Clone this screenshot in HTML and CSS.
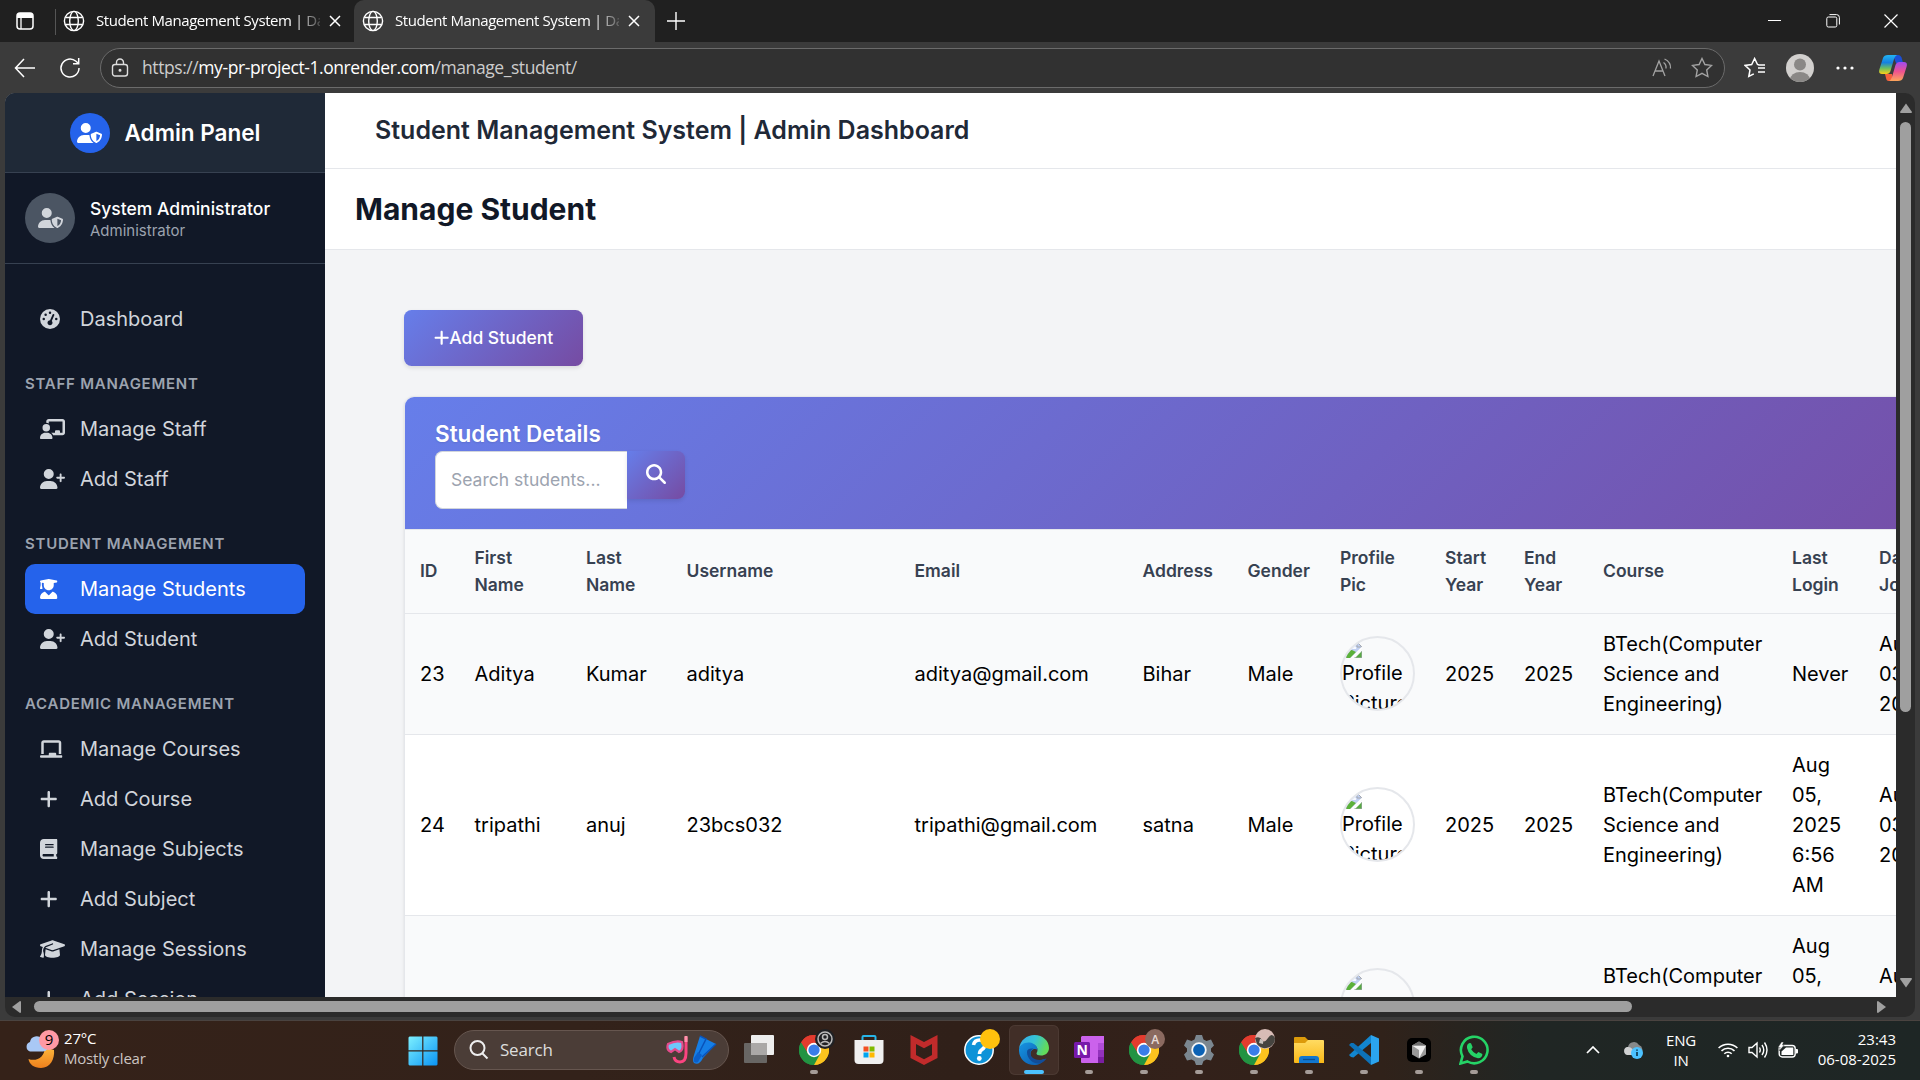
FILE: index.html
```html
<!DOCTYPE html>
<html lang="en">
<head>
<meta charset="utf-8">
<title>Student Management System | Dashboard</title>
<link rel="stylesheet" href="styles.css">
</head>
<body>
<svg class="defs" width="0" height="0" aria-hidden="true">
  <defs>
    <symbol id="user-shield" viewBox="0 0 640 512"><path d="M224 256A128 128 0 1 0 224 0a128 128 0 1 0 0 256zm-45.7 48C79.8 304 0 383.8 0 482.3C0 498.7 13.3 512 29.7 512H418.3c1.8 0 3.5-.2 5.3-.5c-76.3-55.1-99.8-141-103.1-200.2c-16.1-4.8-33.1-7.3-50.7-7.3H178.3zm308.8-78.3l-120 48C358 277.4 352 286.2 352 296c0 63.3 25.9 168.8 134.8 214.2c5.9 2.5 12.6 2.5 18.5 0C614.1 464.8 640 359.3 640 296c0-9.8-6-18.6-15.1-22.3l-120-48c-5.7-2.3-12.1-2.3-17.8 0zM591.4 312c-3.9 50.7-27.2 116.7-95.4 149.7V273.8L591.4 312z"/></symbol>
    <symbol id="gauge" viewBox="0 0 512 512"><path d="M0 256a256 256 0 1 1 512 0A256 256 0 1 1 0 256zM288 96a32 32 0 1 0 -64 0 32 32 0 1 0 64 0zM256 416c35.3 0 64-28.7 64-64c0-17.4-6.9-33.1-18.1-44.6L366 161.7c5.3-12.1-.2-26.3-12.3-31.6s-26.3 .2-31.6 12.3L257.9 288c-.6 0-1.3 0-1.9 0c-35.3 0-64 28.7-64 64s28.7 64 64 64zM176 144a32 32 0 1 0 -64 0 32 32 0 1 0 64 0zM96 288a32 32 0 1 0 0-64 32 32 0 1 0 0 64zm352-32a32 32 0 1 0 -64 0 32 32 0 1 0 64 0z"/></symbol>
    <symbol id="chalkboard-user" viewBox="0 0 640 512"><path d="M160 64c0-35.3 28.7-64 64-64H576c35.3 0 64 28.7 64 64V352c0 35.3-28.7 64-64 64H336.8c-11.8-25.5-29.9-47.5-52.4-64H384V320c0-17.7 14.3-32 32-32h64c17.7 0 32 14.3 32 32v32h64V64L224 64v49.1C205.2 102.2 183.3 96 160 96V64zm0 64a96 96 0 1 1 0 192 96 96 0 1 1 0-192zM133.3 352h53.3C260.3 352 320 411.7 320 485.3c0 14.7-11.9 26.7-26.7 26.7H26.7C11.9 512 0 500.1 0 485.3C0 411.7 59.7 352 133.3 352z"/></symbol>
    <symbol id="user-plus" viewBox="0 0 640 512"><path d="M96 128a128 128 0 1 1 256 0A128 128 0 1 1 96 128zM0 482.3C0 383.8 79.8 304 178.3 304h91.4C368.2 304 448 383.8 448 482.3c0 16.4-13.3 29.7-29.7 29.7H29.7C13.3 512 0 498.7 0 482.3zM504 312V248H440c-13.3 0-24-10.7-24-24s10.7-24 24-24h64V136c0-13.3 10.7-24 24-24s24 10.7 24 24v64h64c13.3 0 24 10.7 24 24s-10.7 24-24 24H552v64c0 13.3-10.7 24-24 24s-24-10.7-24-24z"/></symbol>
    <symbol id="user-graduate" viewBox="0 0 448 512"><path d="M219.3 .5c3.1-.6 6.3-.6 9.4 0l200 40C439.9 42.7 448 52.6 448 64s-8.1 21.3-19.3 23.5L352 102.9V160c0 70.7-57.3 128-128 128s-128-57.3-128-128V102.9L48 93.3v65.1l15.7 78.4c.9 4.7-.3 9.6-3.3 13.3s-7.6 5.9-12.4 5.9H16c-4.8 0-9.3-2.1-12.4-5.9s-4.3-8.6-3.3-13.3L16 158.4V86.6C6.5 83.3 0 74.3 0 64C0 52.6 8.1 42.7 19.3 40.5l200-40zM111.9 327.7c10.5-3.4 21.8 .4 29.4 8.5l71 75.5c6.3 6.7 17 6.7 23.3 0l71-75.5c7.6-8.1 18.9-11.9 29.4-8.5C401 348.6 448 409.4 448 481.3c0 17-13.8 30.7-30.7 30.7H30.7C13.8 512 0 498.2 0 481.3c0-71.9 47-132.7 111.9-153.6z"/></symbol>
    <symbol id="chalkboard" viewBox="0 0 576 512"><path d="M96 32C60.7 32 32 60.7 32 96V384H96V96l384 0V384h64V96c0-35.3-28.7-64-64-64H96zM224 384v32H32c-17.7 0-32 14.3-32 32s14.3 32 32 32H544c17.7 0 32-14.3 32-32s-14.3-32-32-32H416V384c0-17.7-14.3-32-32-32H256c-17.7 0-32 14.3-32 32z"/></symbol>
    <symbol id="plus" viewBox="0 0 448 512"><path d="M256 80c0-17.7-14.3-32-32-32s-32 14.3-32 32V224H48c-17.7 0-32 14.3-32 32s14.3 32 32 32H192V432c0 17.7 14.3 32 32 32s32-14.3 32-32V288H400c17.7 0 32-14.3 32-32s-14.3-32-32-32H256V80z"/></symbol>
    <symbol id="book" viewBox="0 0 448 512"><path d="M96 0C43 0 0 43 0 96V416c0 53 43 96 96 96H384h32c17.7 0 32-14.3 32-32s-14.3-32-32-32V384c17.7 0 32-14.3 32-32V32c0-17.7-14.3-32-32-32H384 96zm0 384H352v64H96c-17.7 0-32-14.3-32-32s14.3-32 32-32zm32-240c0-8.8 7.2-16 16-16H336c8.8 0 16 7.2 16 16s-7.2 16-16 16H144c-8.8 0-16-7.2-16-16zm16 48H336c8.8 0 16 7.2 16 16s-7.2 16-16 16H144c-8.8 0-16-7.2-16-16s7.2-16 16-16z"/></symbol>
    <symbol id="graduation-cap" viewBox="0 0 640 512"><path d="M320 32c-8.1 0-16.1 1.4-23.7 4.1L15.8 137.4C6.3 140.9 0 149.9 0 160s6.3 19.1 15.8 22.6l57.9 20.9C57.3 229.3 48 259.8 48 291.9v28.1c0 28.4-10.8 57.7-22.3 80.8c-6.5 13-13.9 25.8-22.5 37.6C0 442.7-.9 448.3 .9 453.4s6 8.9 11.2 10.2l64 16c4.2 1.1 8.7 .3 12.4-2s6.3-6.1 7.1-10.4c8.6-42.8 4.3-81.2-2.1-108.7C90.3 344.3 86 329.8 80 316.5V291.9c0-30.2 10.2-58.7 27.9-81.5c12.9-15.5 29.6-28 49.2-35.7l157-61.7c8.2-3.2 17.5 .8 20.7 9s-.8 17.5-9 20.7l-157 61.7c-12.4 4.9-23.3 12.4-32.2 21.6l159.6 57.6c7.6 2.7 15.6 4.1 23.7 4.1s16.1-1.4 23.7-4.1L624.2 182.6c9.5-3.4 15.8-12.5 15.8-22.6s-6.3-19.1-15.8-22.6L343.7 36.1C336.1 33.4 328.1 32 320 32zM128 408c0 35.3 86 72 192 72s192-36.7 192-72L496.7 262.6 354.5 314c-11.1 4-22.8 6-34.5 6s-23.5-2-34.5-6L143.3 262.6 128 408z"/></symbol>
    <symbol id="search" viewBox="0 0 512 512"><path d="M416 208c0 45.9-14.9 88.3-40 122.7L502.6 457.4c12.5 12.5 12.5 32.8 0 45.3s-32.8 12.5-45.3 0L330.7 376c-34.4 25.2-76.8 40-122.7 40C93.1 416 0 322.9 0 208S93.1 0 208 0S416 93.1 416 208zM208 352a144 144 0 1 0 0-288 144 144 0 1 0 0 288z"/></symbol>
    <symbol id="globe" viewBox="0 0 22 22"><g fill="none" stroke="#fff" stroke-width="1.4"><circle cx="11" cy="11" r="9.6"/><ellipse cx="11" cy="11" rx="4.3" ry="9.6"/><path d="M2.3 7.5h17.4M2.3 14.5h17.4"/></g></symbol>
    <symbol id="close" viewBox="0 0 12 12"><path d="M1 1l10 10M11 1L1 11" fill="none" stroke="#fff" stroke-width="1.5"/></symbol>
    <symbol id="broken" viewBox="0 0 16 16"><path d="M0 0h11l5 5v2L7 16H0z" fill="#c0d0f2"/><path d="M2 5c0-2 4-3 6-1 2 0 3 2 2 3H2z" fill="#f6f9ff"/><path d="M0 16v-4c2-4 5-5 8-3l2 1-6 6z" fill="#5bb13a"/><path d="M16 9v7H9z" fill="#58a944"/><path d="M0 16V0h11l5 5v3M16 9v7H8M11 0v5h5" fill="none" stroke="#a3a7ae" stroke-width="1"/><path d="M17 5L5 17" stroke="#fff" stroke-width="2"/></symbol>
    <symbol id="chrome" viewBox="0 0 48 48"><path d="M24 24L3.2 12A24 24 0 0 1 44.8 12z" fill="#e33b2e"/><path d="M24 24L44.8 12A24 24 0 0 1 24 48z" fill="#fcc31e"/><path d="M24 24V48A24 24 0 0 1 3.2 12z" fill="#229342"/><path d="M24 13H45.3A24 24 0 0 0 3.2 12L14 30z" fill="#e33b2e"/><path d="M33.5 29.5L24 48A24 24 0 0 0 45.3 13H24z" fill="#fcc31e"/><path d="M14.5 29.5L3.2 12A24 24 0 0 0 24 48l10-18z" fill="#229342"/><circle cx="24" cy="24" r="11.5" fill="#fff"/><circle cx="24" cy="24" r="9" fill="#3a7de8"/></symbol>
    <linearGradient id="winG" x1="0" y1="0" x2="1" y2="1"><stop offset="0" stop-color="#7df0ff"/><stop offset="1" stop-color="#0a94f5"/></linearGradient>
    <linearGradient id="moonG" x1="0" y1="0" x2="0" y2="1"><stop offset="0" stop-color="#fdb93d"/><stop offset="1" stop-color="#ee7f1c"/></linearGradient>
    <linearGradient id="edgeT" x1="0" y1="0" x2="1" y2=".3"><stop offset="0" stop-color="#35a8ef"/><stop offset=".55" stop-color="#35c3d4"/><stop offset="1" stop-color="#62db5c"/></linearGradient>
    <linearGradient id="edgeB" x1="0" y1="0" x2="1" y2="1"><stop offset="0" stop-color="#1695e2"/><stop offset="1" stop-color="#0c56ab"/></linearGradient>
    <linearGradient id="foldG" x1="0" y1="0" x2="0" y2="1"><stop offset="0" stop-color="#ffdb62"/><stop offset="1" stop-color="#f9b817"/></linearGradient>
    <linearGradient id="copA" x1="0" y1="0" x2="0" y2="1"><stop offset="0" stop-color="#22b5f3"/><stop offset=".4" stop-color="#1580e0"/><stop offset=".7" stop-color="#6cbf5f"/><stop offset="1" stop-color="#fbd018"/></linearGradient>
    <linearGradient id="copB" x1="0" y1="0" x2="0" y2="1"><stop offset="0" stop-color="#a04bf0"/><stop offset=".5" stop-color="#ee5290"/><stop offset="1" stop-color="#fda65a"/></linearGradient>
  </defs>
</svg>

<div class="browser">
  <div class="tabs">
    <svg class="tab-menu" viewBox="0 0 18 18" width="18" height="18"><rect x="1" y="1" width="16" height="16" rx="3" fill="none" stroke="#fff" stroke-width="1.5"/><path d="M1 6V4a3 3 0 0 1 3-3h10a3 3 0 0 1 3 3v2z" fill="#fff"/><path d="M5 5v12" stroke="#fff" stroke-width="1.3"/></svg>
    <div class="tab">
      <svg width="22" height="22"><use href="#globe"/></svg>
      <span class="tab-title">Student Management System | Dashboard</span>
      <svg width="12" height="12"><use href="#close"/></svg>
    </div>
    <div class="tab tab-active">
      <svg width="22" height="22"><use href="#globe"/></svg>
      <span class="tab-title">Student Management System | Dashboard</span>
      <svg width="12" height="12"><use href="#close"/></svg>
    </div>
    <svg class="tab-new" width="18" height="18" viewBox="0 0 18 18"><path d="M9 0v18M0 9h18" stroke="#fff" stroke-width="1.4"/></svg>
    <div class="window-buttons">
      <svg width="14" height="14" viewBox="0 0 14 14"><path d="M0 6.5h13" stroke="#fff"/></svg>
      <svg width="14" height="14" viewBox="0 0 14 14" fill="none" stroke="#fff"><rect x=".8" y="3" width="10" height="10" rx="1.5"/><path d="M3.5.6h7A2.9 2.9 0 0 1 13.4 3.500v7"/></svg>
      <svg width="14" height="14" viewBox="0 0 14 14"><path d="M.5.5l13 13M13.500.5l-13 13" stroke="#fff" stroke-width="1.2"/></svg>
    </div>
  </div>

  <div class="toolbar">
    <svg class="back" width="22" height="20" viewBox="0 0 22 20"><path d="M10 1L1.500 10l8.500 9M1.500 10H21" fill="none" stroke="#fff" stroke-width="1.5"/></svg>
    <svg class="reload" width="22" height="22" viewBox="0 0 22 22"><path d="M20 11a9 9 0 1 1-3-6.700L19.500 6.500M19.700 1v5.700H14" fill="none" stroke="#fff" stroke-width="1.5"/></svg>
    <div class="address">
      <svg width="18" height="20" viewBox="0 0 18 20" fill="none" stroke="#ddd" stroke-width="1.4"><rect x="1.500" y="6.500" width="15" height="11.500" rx="2.500"/><path d="M5.500 6.500V4.500a3.500 3.500 0 0 1 7 0v2"/><circle cx="9" cy="12.300" r=".8" fill="#ddd"/></svg>
      <span class="url">https://<b>my-pr-project-1.onrender.com</b>/manage_student/</span>
      <svg class="read-aloud" width="20" height="20" viewBox="0 0 20 20" fill="none" stroke="#a3a3a3" stroke-width="1.300"><path d="M1 18L7 3l6 15M3 13h8M11.500 4.500q3 2 2.500 6M12.500 1q6.500 3 6 9.500"/></svg>
      <svg width="22" height="21" viewBox="0 0 22 21"><path d="M11 1.500l2.900 6 6.600.9-4.800 4.600 1.200 6.500-5.900-3.100-5.900 3.100 1.200-6.500L1.500 8.400l6.600-.9z" fill="none" stroke="#a3a3a3" stroke-width="1.400"/></svg>
    </div>
    <svg class="favorites" width="22" height="21" viewBox="0 0 22 21" fill="none" stroke="#fff" stroke-width="1.500"><path d="M21 8h-6l-1.500-.5-2.900-6-2.900 6-6.600.9L6 13l-1.200 6.500 5-2.600M14 11h7M14 15h7"/></svg>
    <svg class="profile" width="28" height="28" viewBox="0 0 28 28"><clipPath id="pc"><circle cx="14" cy="14" r="14"/></clipPath><g clip-path="url(#pc)"><path d="M0 0h28v28H0z" fill="#d2d0ce"/><circle cx="14" cy="10.500" r="6" fill="#8a8886"/><ellipse cx="14" cy="26" rx="10" ry="8" fill="#8a8886"/></g></svg>
    <svg class="more" width="18" height="4" viewBox="0 0 18 4" fill="#fff"><circle cx="2" cy="2" r="1.600"/><circle cx="9" cy="2" r="1.600"/><circle cx="16" cy="2" r="1.600"/></svg>
    <svg class="copilot" width="28" height="28" viewBox="0 0 28 28"><path d="M14 1h5q3 0 4 4l1 4h-7z" fill="#1c4fd6"/><path d="M14 27H9.500q-2 0-2.500-3l-1-4h7z" fill="#f4603c"/><path d="M9 1h9q-2 1-3 4l-3.500 12q-1 3-4 3H3q-4 0-2.500-5L4 4q1-3 5-3z" fill="url(#copA)"/><path d="M19 27h-9q2-1 3-4l3.500-12q1-3 4-3H25q4 0 2.500 5L24 24q-1 3-5 3z" fill="url(#copB)"/></svg>
  </div>

  <div class="viewport">
    <div class="page">
      <aside class="sidebar">
        <div class="brand">
          <span class="brand-icon"><svg width="25" height="20"><use href="#user-shield"/></svg></span>
          <span class="brand-name">Admin Panel</span>
        </div>
        <div class="admin">
          <span class="admin-avatar"><svg width="25" height="20"><use href="#user-shield"/></svg></span>
          <div><div class="admin-name">System Administrator</div><div class="admin-role">Administrator</div></div>
        </div>
        <nav class="nav">
          <a class="nav-item"><svg width="20" height="20"><use href="#gauge"/></svg><span>Dashboard</span></a>
          <h3>STAFF MANAGEMENT</h3>
          <a class="nav-item"><svg width="25" height="20"><use href="#chalkboard-user"/></svg><span>Manage Staff</span></a>
          <a class="nav-item"><svg width="25" height="20"><use href="#user-plus"/></svg><span>Add Staff</span></a>
          <h3>STUDENT MANAGEMENT</h3>
          <a class="nav-item nav-current"><svg width="17.500" height="20"><use href="#user-graduate"/></svg><span>Manage Students</span></a>
          <a class="nav-item"><svg width="25" height="20"><use href="#user-plus"/></svg><span>Add Student</span></a>
          <h3>ACADEMIC MANAGEMENT</h3>
          <a class="nav-item"><svg width="22.500" height="20"><use href="#chalkboard"/></svg><span>Manage Courses</span></a>
          <a class="nav-item"><svg width="17.500" height="20"><use href="#plus"/></svg><span>Add Course</span></a>
          <a class="nav-item"><svg width="17.500" height="20"><use href="#book"/></svg><span>Manage Subjects</span></a>
          <a class="nav-item"><svg width="17.500" height="20"><use href="#plus"/></svg><span>Add Subject</span></a>
          <a class="nav-item"><svg width="25" height="20"><use href="#graduation-cap"/></svg><span>Manage Sessions</span></a>
          <a class="nav-item"><svg width="17.500" height="20"><use href="#plus"/></svg><span>Add Session</span></a>
        </nav>
      </aside>
      <main class="main">
        <header class="site-header">Student Management System | Admin Dashboard</header>
        <h1 class="page-title">Manage Student</h1>
        <section class="content">
          <a class="btn"><svg width="15.300" height="17.500"><use href="#plus"/></svg>Add Student</a>
          <div class="card">
            <div class="card-header">
              <h2>Student Details</h2>
              <div class="search">
                <input type="text" placeholder="Search students...">
                <button><svg width="20" height="20"><use href="#search"/></svg></button>
              </div>
            </div>
            <table>
              <colgroup><col class="c-id"><col class="c-first"><col class="c-last"><col class="c-user"><col class="c-email"><col class="c-addr"><col class="c-gender"><col class="c-pic"><col class="c-year"><col class="c-year"><col class="c-course"><col class="c-login"><col class="c-joined"></colgroup>
              <thead><tr><th>ID</th><th>First<br>Name</th><th>Last<br>Name</th><th>Username</th><th>Email</th><th>Address</th><th>Gender</th><th>Profile<br>Pic</th><th>Start<br>Year</th><th>End<br>Year</th><th>Course</th><th>Last<br>Login</th><th>Date<br>Joined</th></tr></thead>
              <tbody>
                <tr class="short"><td>23</td><td>Aditya</td><td>Kumar</td><td>aditya</td><td>aditya@gmail.com</td><td>Bihar</td><td>Male</td><td><span class="pic"><svg width="16" height="16"><use href="#broken"/></svg><span>Profile</span><span>Picture</span></span></td><td>2025</td><td>2025</td><td>BTech(Computer<br>Science and<br>Engineering)</td><td>Never</td><td>Aug<br>03,<br>2025</td></tr>
                <tr><td>24</td><td>tripathi</td><td>anuj</td><td>23bcs032</td><td>tripathi@gmail.com</td><td>satna</td><td>Male</td><td><span class="pic"><svg width="16" height="16"><use href="#broken"/></svg><span>Profile</span><span>Picture</span></span></td><td>2025</td><td>2025</td><td>BTech(Computer<br>Science and<br>Engineering)</td><td>Aug<br>05,<br>2025<br>6:56<br>AM</td><td>Aug<br>03,<br>2025</td></tr>
                <tr><td></td><td></td><td></td><td></td><td></td><td></td><td></td><td><span class="pic"><svg width="16" height="16"><use href="#broken"/></svg></span></td><td></td><td></td><td>BTech(Computer<br><br><br></td><td>Aug<br>05,<br><br><br><br></td><td>Aug<br><br><br></td></tr>
              </tbody>
            </table>
          </div>
        </section>
      </main>
    </div>
    <div class="vscroll">
      <svg width="12" height="10" viewBox="0 0 12 10"><path d="M6 .5L12 9q0 1-1 1H1q-1 0-1-1z" fill="#a0a0a0"/></svg>
      <span class="vthumb"></span>
      <svg class="vdown" width="12" height="10" viewBox="0 0 12 10"><path d="M6 9.500L12 1q0-1-1-1H1Q0 0 0 1z" fill="#a0a0a0"/></svg>
    </div>
    <div class="hscroll">
      <svg width="9" height="12" viewBox="0 0 9 12"><path d="M0 6L8 0q1 0 1 1v10q0 1-1 1z" fill="#a0a0a0"/></svg>
      <span class="hthumb"></span>
      <svg class="hright" width="9" height="12" viewBox="0 0 9 12"><path d="M9 6L1 0Q0 0 0 1v10q0 1 1 1z" fill="#a0a0a0"/></svg>
    </div>
  </div>
</div>

<footer class="taskbar">
  <div class="weather">
    <svg width="36" height="44" viewBox="0 0 36 44"><path d="M29 22c1 9-4 18-13 18C9 40 4 36 3.500 31c8 3 17-2 16-12z" fill="url(#moonG)"/><path d="M5 23.500a5 5 0 0 1 0-9.500 6.500 6.500 0 0 1 12-2.500 6 6 0 0 1 1 12z" fill="#a9c8f5"/><circle cx="24" cy="12" r="10" fill="#ff99a4"/><text x="24" y="17.300" text-anchor="middle" class="badge-number">9</text></svg>
    <div class="weather-text"><div>27°C</div><div class="dim">Mostly clear</div></div>
  </div>
  <svg class="start" width="30" height="30" viewBox="0 0 30 30" fill="url(#winG)"><path d="M1.500.5h12.700v13.700H.5V1.500zM15.400.5h13.100l1 1v12.700H15.400zM.5 15.400h13.700v14.100H1.500l-1-1zM15.400 15.400h14.100v13.100l-1 1H15.400z"/></svg>
  <div class="task-search">
    <svg width="20" height="20" viewBox="0 0 20 20" fill="none" stroke="#eee" stroke-width="2"><circle cx="8.500" cy="8" r="7"/><path d="M13.500 13.500l5 5"/></svg>
    <span>Search</span>
    <svg width="52" height="30" viewBox="0 0 52 30"><path d="M20 2v16q0 9-6 9-5 0-6-5" fill="none" stroke="#fb4480" stroke-width="3"/><path d="M20 1v6" stroke="#ff94ac" stroke-width="3"/><path d="M2 9q8-4 14-2 2 8-3 10l-4-3-4 3Q0 15 2 9z" fill="#6dc8fb" stroke="#e54b8c" stroke-width="2.200"/><path d="M34 1l16 8-13 14q-4 8-9 5-2-2 0-8z" fill="#157ee6"/><path d="M34 1l6 3-9 18M50 9L36 22" stroke="#0a53ba" stroke-width="1.500" fill="none"/><path d="M32 17l4 3-4 7q-5 2-4-4z" fill="#0b5fc9"/></svg>
  </div>
  <div class="apps">
    <span class="app"><svg width="30" height="30" viewBox="0 0 30 30"><rect y="8" width="23" height="20" rx="1" fill="#686664"/><rect x="7" width="23" height="20" rx="1" fill="#ededed"/><path d="M7 8h16v12H7z" fill="#aaa8a7"/></svg></span>
    <span class="app running"><svg width="30" height="30"><use href="#chrome"/></svg><svg class="badge" width="20" height="20" viewBox="0 0 20 20"><circle cx="10" cy="10" r="10" fill="#202124"/><circle cx="10" cy="10" r="7" fill="none" stroke="#bbb" stroke-width="1.500"/><circle cx="10" cy="8" r="2.500" fill="none" stroke="#bbb" stroke-width="1.500"/><path d="M5.500 14.500q4.500-4 9 0" fill="none" stroke="#bbb" stroke-width="1.500"/></svg></span>
    <span class="app"><svg width="30" height="30" viewBox="0 0 30 30"><path d="M8.500 6V2q0-1 1-1h11q1 0 1 1v4" fill="none" stroke="#27b5e8" stroke-width="2"/><path d="M.5 5h29v20q0 4-4 4h-21q-4 0-4-4z" fill="#f0f0f0"/><path d="M9.500 11.500h5v5h-5z" fill="#f25022"/><path d="M15.500 11.500h5v5h-5z" fill="#7fba00"/><path d="M9.500 17.500h5v5h-5z" fill="#00a4ef"/><path d="M15.500 17.500h5v5h-5z" fill="#ffb900"/></svg></span>
    <span class="app"><svg width="28" height="30" viewBox="0 0 28 30"><path d="M.5 0L14 7 27.500 0v23L14 30 .5 23zM6 9v11l8 4.300 8-4.300V9l-8 4.300z" fill="#c12b2b" fill-rule="evenodd"/></svg></span>
    <span class="app"><svg width="30" height="30" viewBox="0 0 30 30"><circle cx="15" cy="15" r="14.200" fill="#0e93d8" stroke="#fff" stroke-width="1.500"/><path d="M9.500 10q1-5 6-5 5.500 0 5.500 4.500 0 3-3 5-2.500 1.500-2.500 4.500" fill="none" stroke="#fff" stroke-width="3.600"/><circle cx="15.300" cy="23.500" r="2.400" fill="#fff"/></svg><svg class="badge" width="20" height="20"><circle cx="10" cy="10" r="10" fill="#ffc10d"/></svg></span>
    <span class="app focused"><svg width="30" height="30" viewBox="0 0 30 30"><path d="M0 14C1 5 8 0 15.500 0 24 0 30 6 30 13c0 5-4 7.500-8 7.500-3 0-4.500-1-4.500-2 0-1 1-1.500 1-3.500 0-4-4-6.500-8-6.500C5 8.500 1 11 0 14z" fill="url(#edgeT)"/><path d="M0 14c1-4 5-7 10.500-6.500 5 .5 8 4 8 7.500-2-2-7-1-7 4 0 6 7 8 14 5-2 4-6 6-10 6C6 30-.5 23 0 14z" fill="url(#edgeB)"/><path d="M8 17c0 7 6 12 13 11.500 3-1 5-3 6.500-5-.5-.5-3 1.500-7 1.500-6 0-10-4-9-8 .5-2 2-3 3-3.500C10 13 8 14.500 8 17z" fill="#124d99"/></svg></span>
    <span class="app running"><svg width="30" height="30" viewBox="0 0 30 30"><path d="M8 1h22v27H8q-1 0-1-1V2z" fill="#cb62ec"/><path d="M24 8h6v7h-6z" fill="#b14cd8"/><path d="M24 15h6v7h-6z" fill="#9332bd"/><path d="M24 22h6v6h-6z" fill="#7a1ea2"/><rect y="7" width="16" height="16" rx="1.500" fill="#7719aa"/><text x="8" y="20" text-anchor="middle" class="onenote-letter">N</text></svg></span>
    <span class="app running"><svg width="30" height="30"><use href="#chrome"/></svg><svg class="badge" width="20" height="20"><circle cx="10" cy="10" r="10" fill="#8b6a60"/><text x="10" y="14.500" text-anchor="middle" class="badge-letter">A</text></svg></span>
    <span class="app running"><svg width="30" height="30" viewBox="0 0 30 30"><path d="M12 0h6l1.500 4.500 3 1.500L27 4.500l3 6-3 3v3l3 3-3 6-4.500-1-3 1.500L18 30h-6l-1.500-4-3-1.500L3 25.500l-3-6 3-3v-3l-3-3 3-6L7.500 6l3-1.500z" fill="#7b8790"/><circle cx="15" cy="15" r="6.800" fill="#0b62b5" stroke="#f3f6f8" stroke-width="1.800"/></svg></span>
    <span class="app running"><svg width="30" height="30"><use href="#chrome"/></svg><svg class="badge" width="20" height="20" viewBox="0 0 20 20"><circle cx="10" cy="10" r="10" fill="#d8bcb6"/><path d="M0 9q5-2 7 2t6-2 7 0a10 10 0 0 1-18 6z" fill="#46443f"/><path d="M5 10q4 0 3 5l-4-1z" fill="#c7c1bb"/></svg></span>
    <span class="app running"><svg width="30" height="30" viewBox="0 0 30 30"><path d="M0 3q0-1 1-1h10l3 3v5H0z" fill="#dc9a0a"/><path d="M0 8h11l3-3h15q1 0 1 1v22H1q-1 0-1-1z" fill="url(#foldG)"/><path d="M5 28v-4q0-3 3-3h14q3 0 3 3v4z" fill="#1277cf"/><path d="M9 24.500h12" stroke="#0b4f93" stroke-width="1.300"/></svg></span>
    <span class="app running"><svg width="30" height="30" viewBox="0 0 30 30"><path d="M22 0v8L4.500 22.500 2 22 0 20z" fill="#1286cf"/><path d="M0 10l2-2h2.500L22 22v8z" fill="#0d72b8"/><path d="M22 0l8 3.500v23L22 30z" fill="#2ba4ee"/></svg></span>
    <span class="app running"><svg width="24" height="24" viewBox="0 0 24 24"><rect width="24" height="24" rx="5" fill="#000"/><path d="M12 3.500l7 4v9l-7 4-7-4v-9z" fill="#999"/><path d="M5 7.500h14l-7 13V12z" fill="#eee"/><path d="M5 7.500l7-4 7 4z" fill="#6f6f6f"/></svg></span>
    <span class="app running"><svg width="30" height="30" viewBox="0 0 30 30"><path d="M1.500 28.500l2-7.200A13.300 13.300 0 1 1 8.500 26.500z" fill="none" stroke="#25d366" stroke-width="2.600"/><path d="M10.500 8l1.500.2 1.700 4-1.500 2q2 3.500 5.200 4.800l2-2 4 2q0 4-4.400 4.300Q10 21.500 8 13q-.5-4 2.500-5z" fill="#25d366"/></svg></span>
  </div>
  <div class="tray">
    <svg class="chevron" width="14" height="8" viewBox="0 0 14 8"><path d="M1 7l6-6 6 6" fill="none" stroke="#fff" stroke-width="1.700"/></svg>
    <svg class="cloud" width="20" height="18" viewBox="0 0 20 18"><path d="M5 6a6 6 0 0 1 11-2 5 5 0 0 1 1 9H8z" fill="#87898a"/><path d="M4 14a4.200 4.200 0 0 1 0-8q6-1 8 8z" fill="#d0d1d2"/><circle cx="14" cy="12" r="6" fill="#4cc2ff"/><path d="M14 11v4M14 8.500v1.300" stroke="#06283b" stroke-width="1.500"/></svg>
    <div class="lang"><div>ENG</div><div>IN</div></div>
    <svg class="wifi" width="20" height="16" viewBox="0 0 20 16" fill="none" stroke="#fff" stroke-width="1.600"><path d="M.6 6a13.500 13.500 0 0 1 18.800 0M3.500 8.900a9.300 9.300 0 0 1 13 0M6.300 11.700a5.300 5.300 0 0 1 7.400 0"/><circle cx="10" cy="14" r="1.300" fill="#fff" stroke="none"/></svg>
    <svg class="volume" width="20" height="18" viewBox="0 0 20 18" fill="none" stroke="#fff" stroke-width="1.400"><path d="M1 6.500h3L9 2v14l-5-4.500H1zM11.500 6.500q1.500 2.500 0 5M14 4q3.500 5 0 10M16.500 1.500q5 7.500 0 15"/></svg>
    <svg class="battery" width="20" height="16" viewBox="0 0 20 16"><rect x="1.200" y="3.500" width="16" height="11.500" rx="3" fill="none" stroke="#fff" stroke-width="1.400"/><path d="M3.500 13V9.500L8 5.500h7.300V13zM18 7h1q1 0 1 1v2.500q0 1-1 1h-1z" fill="#fff"/><path d="M3.500 0L0 5.500h2.200l-1 3.500 5-6H4.500L5.500 0z" fill="#fff" stroke="#202624" stroke-width=".4"/></svg>
    <div class="clock"><div>23:43</div><div>06-08-2025</div></div>
  </div>
</footer>
</body>
</html>
```
FILE: styles.css
```css
* { box-sizing: border-box; }
body { margin: 0; width: 1920px; height: 1080px; overflow: hidden; background: #3b3b3b; font-family: Inter, sans-serif; font-size: 20px; }
.defs { position: absolute; }
svg { display: block; flex: none; }
h1, h2, h3 { margin: 0; }

/* Browser chrome */
.browser { height: 1020px; background: #3b3b3b; }
.tabs { display: flex; align-items: center; height: 42px; padding-bottom: 1px; background: #202020; font-family: "Open Sans", sans-serif; }
.tab-menu { margin-left: 16px; }
.tab { display: flex; align-items: center; width: 299px; height: 42px; padding-left: 7px; color: #fff; font-size: 15px; letter-spacing: -0.42px; }
.tab:not(.tab-active) { margin-left: 21px; border-image: linear-gradient(transparent 22%, #555 22%, #555 82%, transparent 82%) 1; border-left: 1px solid; }
.tab-active { width: 301px; padding-left: 8px; border-radius: 10px 10px 0 0; background: #3b3b3b; }
.tab-title { width: 224px; margin: 0 9px 2px 11px; overflow: hidden; white-space: nowrap; -webkit-mask-image: linear-gradient(90deg, #000 198px, transparent 230px); mask-image: linear-gradient(90deg, #000 198px, transparent 230px); }
.tab-new { margin-left: 12px; }
.window-buttons { display: flex; gap: 44px; margin-left: auto; padding-right: 22px; }
.toolbar { display: flex; align-items: center; height: 51px; font-family: "Open Sans", sans-serif; }
.back { margin-left: 14px; }
.reload { margin-left: 23px; }
.address { display: flex; align-items: center; width: 1625px; height: 40px; margin-left: 19px; padding: 0 11px 0 10px; border: 1px solid #6b6b6b; border-radius: 20px; background: #313131; }
.url { margin-left: 13px; padding-bottom: 1px; color: #ccc; font-size: 17.5px; letter-spacing: -0.42px; }
.url b { color: #fff; font-weight: 400; }
.read-aloud { margin: 0 19px 0 auto; }
.favorites { margin-left: 19px; }
.profile { margin-left: 20px; }
.more { margin-left: 22px; }
.copilot { margin-left: 25px; }

.viewport { display: grid; grid-template: 904px 20px / 1891px 19px; margin-left: 5px; width: 1910px; background: #2b2b2b; border-radius: 10px; overflow: hidden; }
.page { display: flex; overflow: hidden; height: 904px; background: #f3f4f6; }
.vscroll { grid-row: 1 / 3; grid-column: 2; display: flex; flex-direction: column; align-items: center; padding-top: 10px; }
.vthumb { width: 11px; height: 590px; margin-top: 9px; border-radius: 6px; background: #9f9f9f; }
.vdown { margin-top: 266px; }
.hscroll { grid-row: 2; grid-column: 1; display: flex; align-items: center; padding: 0 0 1px 7px; }
.hthumb { width: 1598px; height: 11px; margin-left: 13px; border-radius: 6px; background: #9f9f9f; }
.hright { margin-left: 245px; }

/* Sidebar */
.sidebar { flex: none; width: 320px; background: #111827; color: #d1d5db; }
.brand { display: flex; align-items: center; justify-content: center; gap: 15px; height: 80px; background: #1f2937; border-bottom: 1px solid #374151; }
.brand-icon, .admin-avatar { display: grid; place-items: center; border-radius: 50%; }
.brand-icon { width: 40px; height: 40px; background: #2563eb; fill: #fff; }
.brand-name { color: #fff; font-size: 22.5px; font-weight: 600; }
.admin { display: flex; align-items: center; gap: 15px; height: 91px; padding: 0 20px; border-bottom: 1px solid #374151; }
.admin-avatar { width: 50px; height: 50px; background: #4b5563; fill: #d1d5db; }
.admin-name { color: #fff; font-size: 17.5px; font-weight: 500; line-height: 25px; }
.admin-role { color: #9ca3af; font-size: 15px; line-height: 20px; }
.nav { padding: 30px 20px 0; }
.nav-item { display: flex; align-items: center; height: 50px; padding-left: 15px; border-radius: 10px; font-size: 20px; fill: currentColor; }
.nav-item svg { margin-right: auto; }
.nav-item span { width: 225px; }
.nav-current { background: #2563eb; color: #fff; }
.nav h3 { height: 60px; padding-top: 30px; color: #9ca3af; font-size: 15px; font-weight: 600; letter-spacing: 0.75px; line-height: 20px; }

/* Main column */
.main { flex: none; width: 1845px; background: #f3f4f6; }
.site-header { height: 76px; padding: 0 50px; background: #fff; border-bottom: 1px solid #e5e7eb; color: #1f2937; font-size: 25px; font-weight: 600; line-height: 74px; }
.page-title { height: 81px; padding: 0 30px; background: #fff; border-bottom: 1px solid #e5e7eb; color: #111827; font-size: 30px; font-weight: 700; line-height: 80px; }
.content { padding: 60px 79px; }
.btn { display: inline-flex; align-items: center; height: 56px; padding: 0 30px 1px; border-radius: 7.5px; background: linear-gradient(135deg, #667eea 0%, #764ba2 100%); box-shadow: 0 2px 4px rgb(0 0 0 / 10%); color: #fff; fill: #fff; font-size: 17.5px; font-weight: 500; }
.card { width: 1683px; margin-top: 30px; border: 1px solid #e5e7eb; border-radius: 10px; background: #fff; box-shadow: 0 1px 3px rgb(0 0 0 / 10%); overflow: hidden; }
.card-header { height: 133px; padding: 20px 30px; border-bottom: 1px solid #e5e7eb; background: linear-gradient(135deg, #667eea 0%, #764ba2 100%); }
.card-header h2 { color: #fff; font-size: 22.5px; font-weight: 600; line-height: 34px; text-shadow: 0 1px 2px rgb(0 0 0 / 10%); }
.search { display: flex; align-items: flex-start; }
.search input { width: 192px; height: 58px; padding: 0 15px 2px; border: 1px solid #d1d5db; border-right: 0; border-radius: 7.5px 0 0 7.5px; background: #fff; font: 17.5px Inter, sans-serif; }
.search input::placeholder { color: #9ca3af; }
.search button { display: grid; place-items: center; width: 58px; height: 48px; padding: 0 0 2px; border: 0; border-radius: 0 7.5px 7.5px 0; background: linear-gradient(135deg, #667eea 0%, #764ba2 100%); box-shadow: 0 2px 4px rgb(0 0 0 / 10%); fill: #fff; }
table { width: 1563px; table-layout: fixed; border-collapse: separate; border-spacing: 0; }
.c-id { width: 54.5px; } .c-first { width: 111.5px; } .c-last { width: 100.5px; } .c-user { width: 228px; } .c-email { width: 228px; }
.c-addr { width: 105px; } .c-gender { width: 92.5px; } .c-pic { width: 105px; } .c-year { width: 79px; } .c-course { width: 189px; } .c-login { width: 87px; } .c-joined { width: 104px; }
th, td { padding: 0 15px; border-bottom: 1px solid #e5e7eb; text-align: left; vertical-align: middle; }
th { height: 84px; padding-bottom: 2px; background: #f9fafb; color: #374151; font-size: 17.5px; font-weight: 600; line-height: 27px; }
td { height: 181px; color: #000; line-height: 30px; white-space: nowrap; }
.short td { height: 121px; }
tbody tr:nth-child(odd) { background: #f9fafb; }
.pic { display: flex; flex-direction: column; width: 75px; height: 75px; margin-bottom: 2px; padding-top: 4px; border: 2.5px solid #e5e7eb; border-radius: 50%; overflow: hidden; line-height: 30px; }
.pic svg { flex: none; margin: 0 0 0 4px; }
.pic span { flex: none; }

/* Taskbar */
.taskbar { display: flex; align-items: center; height: 60px; border-top: 1px solid #4a4340; background: linear-gradient(90deg, #352219 0%, #33221a 30%, #302019 50%, #33211a 62%, #30221a 72%, #202624 80%, #1e2625 100%); color: #fff; font-family: "Open Sans", "Noto Sans", sans-serif; font-size: 15px; line-height: 20px; letter-spacing: -0.2px; }
.weather { display: flex; align-items: center; width: 383px; padding: 0 0 2px 25px; }
.weather-text { margin: 0 0 3px 3px; }
.dim { color: #ccc5c2; }
.badge-number { fill: #000; font-size: 15px; }
.start { margin-left: 25px; }
.task-search { display: flex; align-items: center; width: 275px; height: 40px; margin: 0 0 1px 16px; padding: 0 10px 0 14px; border: 1px solid #66564f; border-radius: 20px; background: #4b3d37; color: #ddd; font-size: 17px; }
.task-search span { margin: 0 auto 0 11px; }
.apps { display: flex; margin: 0 0 1px 5px; }
.app { position: relative; display: grid; place-items: center; width: 50px; height: 50px; margin-right: 5px; border-radius: 6px; }
.app.running::after, .app.focused::after { content: ""; position: absolute; bottom: 1px; left: 21px; width: 8px; height: 4px; border-radius: 2px; background: #a59c98; }
.app.focused { background: #412e27; box-shadow: inset 0 0 0 1px #4b3932; }
.app.focused::after { left: 15px; width: 20px; background: #4cc2ff; }
.badge { position: absolute; left: 26px; top: 4px; }
.onenote-letter { fill: #fff; font-size: 14px; font-weight: 700; }
.badge-letter { fill: #e8dcd8; font-size: 12px; font-weight: 600; }
.tray { display: flex; align-items: center; margin-left: auto; padding: 0 24px 2px 0; text-align: center; }
.cloud { margin-left: 23px; }
.lang { width: 34px; margin-left: 21px; }
.wifi { margin-left: 20px; }
.volume { margin-left: 10px; }
.battery { margin-left: 10px; }
.clock { width: 90px; margin-left: 8px; text-align: right; white-space: nowrap; letter-spacing: 0; padding-bottom: 1px; }
```
